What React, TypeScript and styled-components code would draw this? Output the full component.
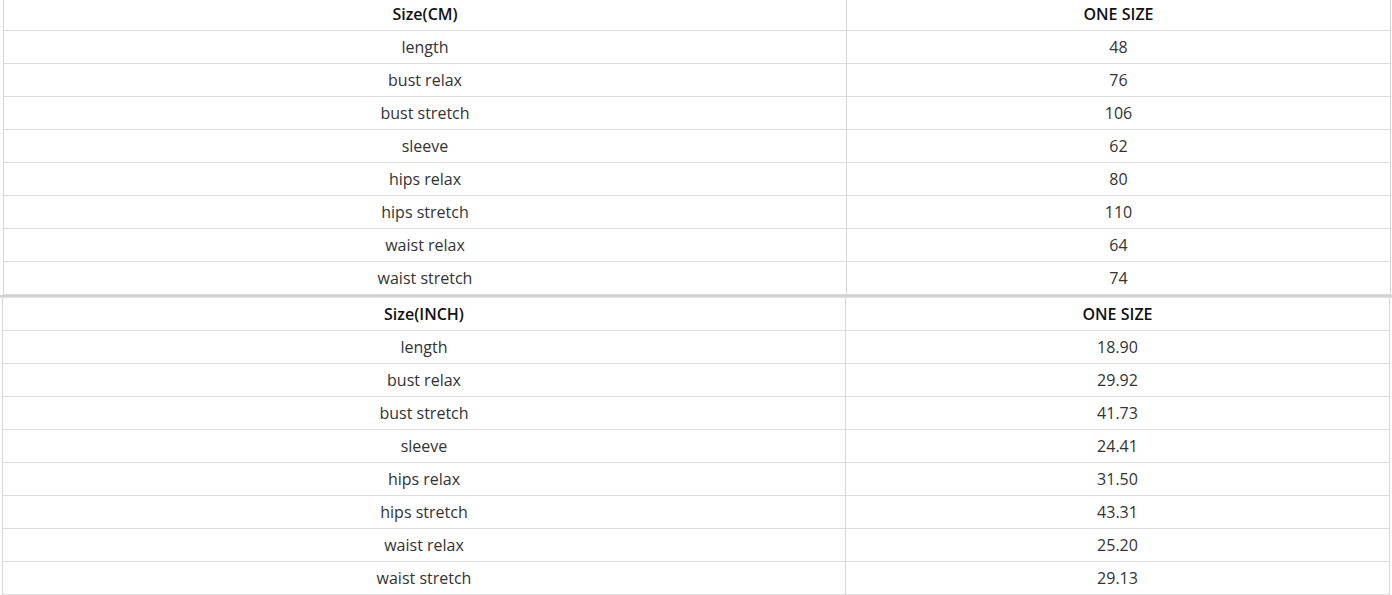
import React from "react";
import styled, { createGlobalStyle } from "styled-components";

const Global = createGlobalStyle`
  html, body { margin: 0; padding: 0; background: #fff; }
  body { font-family: "Open Sans", "Noto Sans", sans-serif; overflow: hidden; }
`;

const Page = styled.div`
  width: 1392px;
  height: 595px;
  overflow: hidden;
  display: flex;
  flex-direction: column;
`;

const Table = styled.div<{ $left: number; $top: number }>`
  margin-left: ${(p) => p.$left}px;
  margin-top: ${(p) => p.$top}px;
  width: 1388px;
  box-sizing: border-box;
  border-left: 1px solid #d6d6d6;
  border-right: 1px solid #d6d6d6;
  display: flex;
  flex-direction: column;
`;

const Row = styled.div`
  display: grid;
  grid-template-columns: 843px 543px;
  height: 33px;
  box-sizing: border-box;
  border-bottom: 1px solid #dcdcdc;
`;

const Cell = styled.div<{ $head?: boolean }>`
  display: flex;
  align-items: center;
  justify-content: center;
  font-size: 16px;
  line-height: 32px;
  color: ${(p) => (p.$head ? "#111" : "#333")};
  font-weight: ${(p) => (p.$head ? 600 : 400)};
  &:first-child {
    border-right: 1px solid #d6d6d6;
  }
`;

const Separator = styled.div`
  height: 3px;
  width: 1392px;
  background: linear-gradient(#cfcfcf, #d4d4d4 60%, #ececec);
`;

const labels = [
  "length",
  "bust relax",
  "bust stretch",
  "sleeve",
  "hips relax",
  "hips stretch",
  "waist relax",
  "waist stretch",
];

const cm = ["48", "76", "106", "62", "80", "110", "64", "74"];
const inch = ["18.90", "29.92", "41.73", "24.41", "31.50", "43.31", "25.20", "29.13"];

function SizeTable({ title, values, left, top }: { title: string; values: string[]; left: number; top: number }) {
  return (
    <Table $left={left} $top={top}>
      <Row>
        <Cell $head>{title}</Cell>
        <Cell $head>ONE SIZE</Cell>
      </Row>
      {labels.map((l, i) => (
        <Row key={l}>
          <Cell>{l}</Cell>
          <Cell>{values[i]}</Cell>
        </Row>
      ))}
    </Table>
  );
}

export default function App() {
  return (
    <Page>
      <Global />
      <SizeTable title="Size(CM)" values={cm} left={3} top={-2} />
      <Separator />
      <SizeTable title="Size(INCH)" values={inch} left={2} top={0} />
    </Page>
  );
}
